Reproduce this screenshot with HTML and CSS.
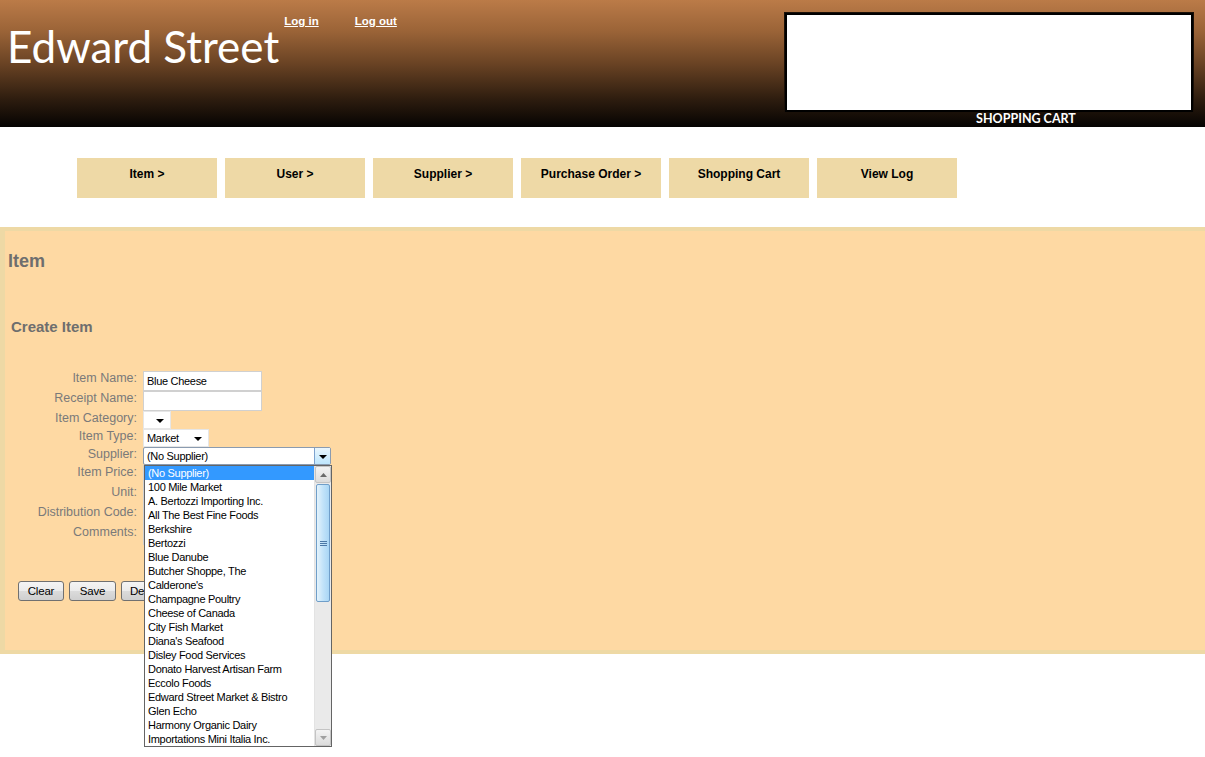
FILE: index.html
```html
<!DOCTYPE html>
<html>
<head>
<meta charset="utf-8">
<title>Edward Street</title>
<link rel="stylesheet" href="styles.css">
</head>
<body>
<header class="top">
  <div class="brand">Edward Street</div>
  <div class="links">
    <a href="#">Log in</a>
    <a href="#">Log out</a>
  </div>
  <div class="cart">
    <div class="cart-box"></div>
    <div class="cart-label">SHOPPING CART</div>
  </div>
</header>

<nav class="menu">
  <a class="menu-btn" href="#">Item &gt;</a>
  <a class="menu-btn" href="#">User &gt;</a>
  <a class="menu-btn" href="#">Supplier &gt;</a>
  <a class="menu-btn" href="#">Purchase Order &gt;</a>
  <a class="menu-btn" href="#">Shopping Cart</a>
  <a class="menu-btn" href="#">View Log</a>
</nav>

<main class="panel">
  <h1 class="panel-title">Item</h1>
  <h2 class="sub-title">Create Item</h2>
  <form class="form">
    <div class="row r20"><label class="lbl">Item Name:</label><input class="txt" value="Blue Cheese"></div>
    <div class="row r20"><label class="lbl">Receipt Name:</label><input class="txt" value=""></div>
    <div class="row r18"><label class="lbl">Item Category:</label><div class="sel sel-cat"><span class="tri"></span></div></div>
    <div class="row r18"><label class="lbl">Item Type:</label><div class="sel sel-type"><span class="sel-text">Market</span><span class="tri"></span></div></div>
    <div class="row r18 sup-row"><label class="lbl">Supplier:</label>
      <div class="sup-wrap">
        <div class="sup"><span class="sel-text">(No Supplier)</span><span class="sup-btn"><span class="tri"></span></span></div>
        <div class="dropdown">
          <ul class="opts">
            <li class="opt on">(No Supplier)</li>
            <li class="opt">100 Mile Market</li>
            <li class="opt">A. Bertozzi Importing Inc.</li>
            <li class="opt">All The Best Fine Foods</li>
            <li class="opt">Berkshire</li>
            <li class="opt">Bertozzi</li>
            <li class="opt">Blue Danube</li>
            <li class="opt">Butcher Shoppe, The</li>
            <li class="opt">Calderone's</li>
            <li class="opt">Champagne Poultry</li>
            <li class="opt">Cheese of Canada</li>
            <li class="opt">City Fish Market</li>
            <li class="opt">Diana's Seafood</li>
            <li class="opt">Disley Food Services</li>
            <li class="opt">Donato Harvest Artisan Farm</li>
            <li class="opt">Eccolo Foods</li>
            <li class="opt">Edward Street Market &amp; Bistro</li>
            <li class="opt">Glen Echo</li>
            <li class="opt">Harmony Organic Dairy</li>
            <li class="opt">Importations Mini Italia Inc.</li>
          </ul>
          <div class="sbar">
            <div class="sb-btn"><svg width="7" height="4" viewBox="0 0 7 4"><path d="M0 4 L3.5 0 L7 4 Z" fill="#6a6a6a"/></svg></div>
            <div class="sb-track">
              <div class="sb-thumb"><span class="grip"></span><span class="grip"></span><span class="grip"></span></div>
            </div>
            <div class="sb-btn"><svg width="7" height="4" viewBox="0 0 7 4"><path d="M0 0 L3.5 4 L7 0 Z" fill="#a0a0a0"/></svg></div>
          </div>
        </div>
      </div>
    </div>
    <div class="row r20"><label class="lbl">Item Price:</label><input class="txt" value=""></div>
    <div class="row r20"><label class="lbl">Unit:</label><input class="txt" value=""></div>
    <div class="row r20"><label class="lbl">Distribution Code:</label><input class="txt" value=""></div>
    <div class="row r20"><label class="lbl">Comments:</label><input class="txt" value=""></div>
    <div class="actions">
      <button type="button" class="btn b-clear">Clear</button>
      <button type="button" class="btn b-save">Save</button>
      <button type="button" class="btn b-del">Delete</button>
    </div>
  </form>
</main>
</body>
</html>
```

FILE: styles.css
```css
* { box-sizing: border-box; }
html, body { margin: 0; padding: 0; background: #ffffff; }
html { min-height: 757px; }
body { min-height: 757px; font-family: "Liberation Sans", Arial, sans-serif; font-size: 12px; color: #000; }

.top {
  height: 127px;
  display: flex;
  align-items: flex-start;
  background: linear-gradient(to bottom, #bb7b48 0%, #9a6337 25%, #6a4324 50%, #2e1d0f 78%, #050302 100%);
}
.brand {
  font-family: "Lato", "Open Sans", sans-serif;
  font-size: 44px;
  color: #ffffff;
  margin: 19px 0 0 7px;
  line-height: 54px;
  white-space: nowrap;
}
.links { display: flex; gap: 36px; margin: 15px 0 0 5px; }
.links a { color: #ffffff; font-weight: bold; font-size: 11.5px; text-decoration: underline; }
.cart { margin: 13px 12px 0 auto; width: 408px; display: flex; flex-direction: column; align-items: center; }
.cart-box { width: 408px; height: 99px; background: #ffffff; border: 2px solid #000; box-shadow: 0 0 0 1px #1a1008; }
.cart-label { font-family: "Lato", "Liberation Sans", sans-serif; color: #fff; font-weight: bold; font-size: 12.5px; line-height: 14px; margin-top: 0; padding-left: 74px; }

.menu { display: flex; gap: 8px; padding: 31px 0 0 77px; margin-bottom: 29px; }
.menu-btn {
  width: 140px; height: 40px; background: #eed9a6; color: #000;
  font-weight: bold; font-size: 12px; text-decoration: none; text-align: center;
  padding-top: 9px; line-height: 14px;
}

.panel {
  background: #fed9a3;
  border-top: 4px solid #eed9a5;
  border-left: 5px solid #eed9a5;
  border-bottom: 4px solid #eed9a5;
  padding: 19px 0 49px 3px;
}
.panel-title { margin: 0; font-size: 18px; font-weight: bold; line-height: 22px; color: #6e6e6e; }
.sub-title { margin: 46px 0 0 3px; font-size: 15px; font-weight: bold; line-height: 18px; color: #6e6e6e; }

.form { margin-top: 35px; }
.row { display: flex; align-items: flex-start; }
.r20 { height: 20px; }
.r18 { height: 18px; }
.lbl { width: 129px; text-align: right; color: #7a7a7a; font-size: 12.5px; line-height: 14px; margin-right: 6px; white-space: nowrap; }

.txt {
  width: 119px; height: 20px; border: 1px solid #d0d0d0; background: #fff; margin: 0;
  font-family: "Liberation Sans", sans-serif; font-size: 11px; letter-spacing: -0.3px; padding: 0 3px; color: #000;
  outline: none;
}

.sel {
  height: 18px; background: #fff; border: 1px solid #e6e6e6; display: flex; align-items: center;
  font-family: "Liberation Sans", sans-serif; font-size: 11px; letter-spacing: -0.3px;
}
.sel-cat { width: 28px; justify-content: flex-end; padding-right: 6px; }
.sel-type { width: 66px; justify-content: space-between; padding: 0 6px 0 3px; }
.tri { width: 0; height: 0; border-left: 4px solid transparent; border-right: 4px solid transparent; border-top: 4px solid #000; margin-top: 2px; }

.sup-wrap { position: relative; }
.sup {
  width: 188px; height: 18px; background: #fff; border: 1px solid #8a9bb0; border-radius: 2px;
  display: flex; align-items: center; justify-content: space-between; padding-left: 3px;
  font-family: "Liberation Sans", sans-serif; font-size: 11px; letter-spacing: -0.3px;
}
.sup-btn {
  width: 16px; height: 16px; display: flex; align-items: center; justify-content: center;
  background: linear-gradient(to bottom, #eaf6fd, #bee6fd); border-left: 1px solid #7da2ce;
}
.sup-btn .tri { margin-top: 1px; }

.dropdown {
  position: absolute; top: 18px; left: 1px; width: 188px; height: 282px;
  background: #fff; border: 1px solid #646464; display: flex; z-index: 5;
}
.opts { list-style: none; margin: 0; padding: 0; flex: 1; }
.opt {
  height: 14px; line-height: 14px; padding-left: 3px; white-space: nowrap;
  font-family: "Liberation Sans", sans-serif; font-size: 11px; letter-spacing: -0.3px; color: #000;
}
.opt.on { background: #3399ff; color: #fff; }
.sbar { width: 17px; display: flex; flex-direction: column; background: #eaeaea; border-left: 1px solid #e3e3e3; }
.sb-btn {
  height: 17px; display: flex; align-items: center; justify-content: center;
  background: linear-gradient(to bottom, #f3f3f3, #dcdcdc); border: 1px solid #c4c4c4; border-radius: 2px;
}
.sb-track { flex: 1; padding: 1px 0; }
.sb-thumb {
  height: 118px; margin: 0 1px; border: 1px solid #6f9ec9; border-radius: 2px;
  background: linear-gradient(to right, #e4f3fc, #c2e3f9 50%, #a9d6f5);
  display: flex; flex-direction: column; align-items: center; justify-content: center; gap: 1px;
}
.grip { width: 7px; height: 1px; background: #4b78a6; }

.actions { display: flex; gap: 5px; margin: 36px 0 0 10px; }
.btn {
  height: 20px; padding: 0; margin: 0; border: 1px solid #707070; border-radius: 3px;
  background: linear-gradient(to bottom, #f4f4f4 0%, #ebebeb 50%, #dbdbdb 51%, #cfcfcf 100%);
  font-family: "Liberation Sans", sans-serif; font-size: 11.5px; letter-spacing: -0.2px; color: #000;
}
.b-clear { width: 46px; }
.b-save { width: 47px; }
.b-del { width: 50px; text-align: left; padding-left: 8px; }
```
